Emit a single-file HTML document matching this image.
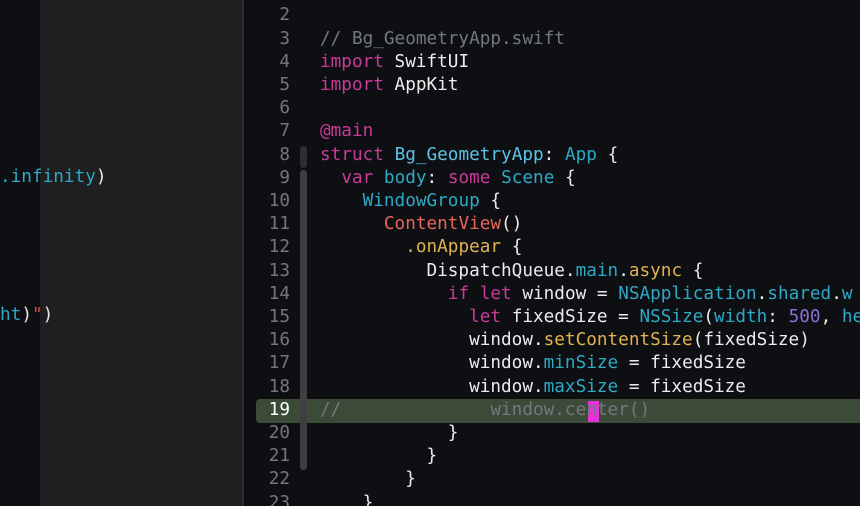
<!DOCTYPE html>
<html><head><style>
html,body{margin:0;padding:0;width:860px;height:506px;overflow:hidden;background:#0e0f13;}
body{position:relative;font-family:"DejaVu Sans Mono","Liberation Mono",monospace;font-size:17.7px;}
.lp{position:absolute;left:40px;top:0;width:202px;height:506px;background:#1f1f21;}
.div{position:absolute;left:242px;top:0;width:2px;height:506px;background:#2c2c2e;}
.ed{position:absolute;left:244px;top:0;right:0;height:506px;background:#0e0f13;}
.hl{position:absolute;left:256px;top:399px;width:604px;height:24px;background:#3c4b37;border-radius:4px 0 0 4px;}
.ln{position:absolute;left:250px;width:40px;text-align:right;color:#75777c;height:23.2px;line-height:23.2px;}
.c{position:absolute;left:320px;white-space:pre;color:#ececed;height:23.2px;line-height:23.2px;}
.l{position:absolute;left:0;white-space:pre;color:#e9e9ea;line-height:23.2px;}
.k{color:#c93a9a}.t{color:#2ea9c6}.tl{color:#5cc3e6}.r{color:#e8665a}.y{color:#e3b250}.p{color:#8b6fd4}.cm{color:#737780}
.bar{position:absolute;left:300px;width:7px;background:#3a3a3d;border-radius:3px;}
.cur{position:absolute;left:588px;top:401px;width:11px;height:21px;background:#e632d8;}
</style></head><body>
<div class="lp"></div>
<div class="l" style="top:166px"><span class="t">.infinity</span>)</div>
<div class="l" style="top:304px"><span class="t">ht</span>)<span style="color:#e04848">"</span>)</div>
<div class="div"></div>
<div class="ed"></div>
<div class="hl"></div>
<div class="bar" style="top:146px;height:22px;background:#2e2e31"></div>
<div class="bar" style="top:170px;height:300px;background:#3f3f42"></div>
<div class="cur"></div>

<div class="ln" style="top:-18.8px">1</div><div class="c" style="top:-18.8px"><span class="cm">              ,</span></div>
<div class="ln" style="top:4.4px">2</div>
<div class="ln" style="top:27.6px">3</div><div class="c" style="top:27.6px"><span class="cm">// Bg_GeometryApp.swift</span></div>
<div class="ln" style="top:50.8px">4</div><div class="c" style="top:50.8px"><span class="k">import</span> SwiftUI</div>
<div class="ln" style="top:74px">5</div><div class="c" style="top:74px"><span class="k">import</span> AppKit</div>
<div class="ln" style="top:97.2px">6</div>
<div class="ln" style="top:120.4px">7</div><div class="c" style="top:120.4px"><span class="k">@main</span></div>
<div class="ln" style="top:143.6px">8</div><div class="c" style="top:143.6px"><span class="k">struct</span> <span class="tl">Bg_GeometryApp</span>: <span class="t">App</span> {</div>
<div class="ln" style="top:166.8px">9</div><div class="c" style="top:166.8px">  <span class="k">var</span> <span class="t">body</span>: <span class="k">some</span> <span class="t">Scene</span> {</div>
<div class="ln" style="top:190px">10</div><div class="c" style="top:190px">    <span class="t">WindowGroup</span> {</div>
<div class="ln" style="top:213.2px">11</div><div class="c" style="top:213.2px">      <span class="r">ContentView</span>()</div>
<div class="ln" style="top:236.4px">12</div><div class="c" style="top:236.4px">        <span class="y">.onAppear</span> {</div>
<div class="ln" style="top:259.6px">13</div><div class="c" style="top:259.6px">          DispatchQueue.<span class="t">main</span>.<span class="y">async</span> {</div>
<div class="ln" style="top:282.8px">14</div><div class="c" style="top:282.8px">            <span class="k">if let</span> window = <span class="t">NSApplication</span>.<span class="t">shared</span>.<span class="t">w</span></div>
<div class="ln" style="top:306px">15</div><div class="c" style="top:306px">              <span class="k">let</span> fixedSize = <span class="t">NSSize</span>(<span class="t">width</span>: <span class="p">500</span>, <span class="t">he</span></div>
<div class="ln" style="top:329.2px">16</div><div class="c" style="top:329.2px">              window.<span class="y">setContentSize</span>(fixedSize)</div>
<div class="ln" style="top:352.4px">17</div><div class="c" style="top:352.4px">              window.<span class="t">minSize</span> = fixedSize</div>
<div class="ln" style="top:375.6px">18</div><div class="c" style="top:375.6px">              window.<span class="t">maxSize</span> = fixedSize</div>
<div class="ln" style="top:398.8px;color:#fff">19</div><div class="c" style="top:398.8px"><span class="cm">//              window.center()</span></div>
<div class="ln" style="top:422px">20</div><div class="c" style="top:422px">            }</div>
<div class="ln" style="top:445.2px">21</div><div class="c" style="top:445.2px">          }</div>
<div class="ln" style="top:468.4px">22</div><div class="c" style="top:468.4px">        }</div>
<div class="ln" style="top:491.6px">23</div><div class="c" style="top:491.6px">    }</div>
</body></html>
